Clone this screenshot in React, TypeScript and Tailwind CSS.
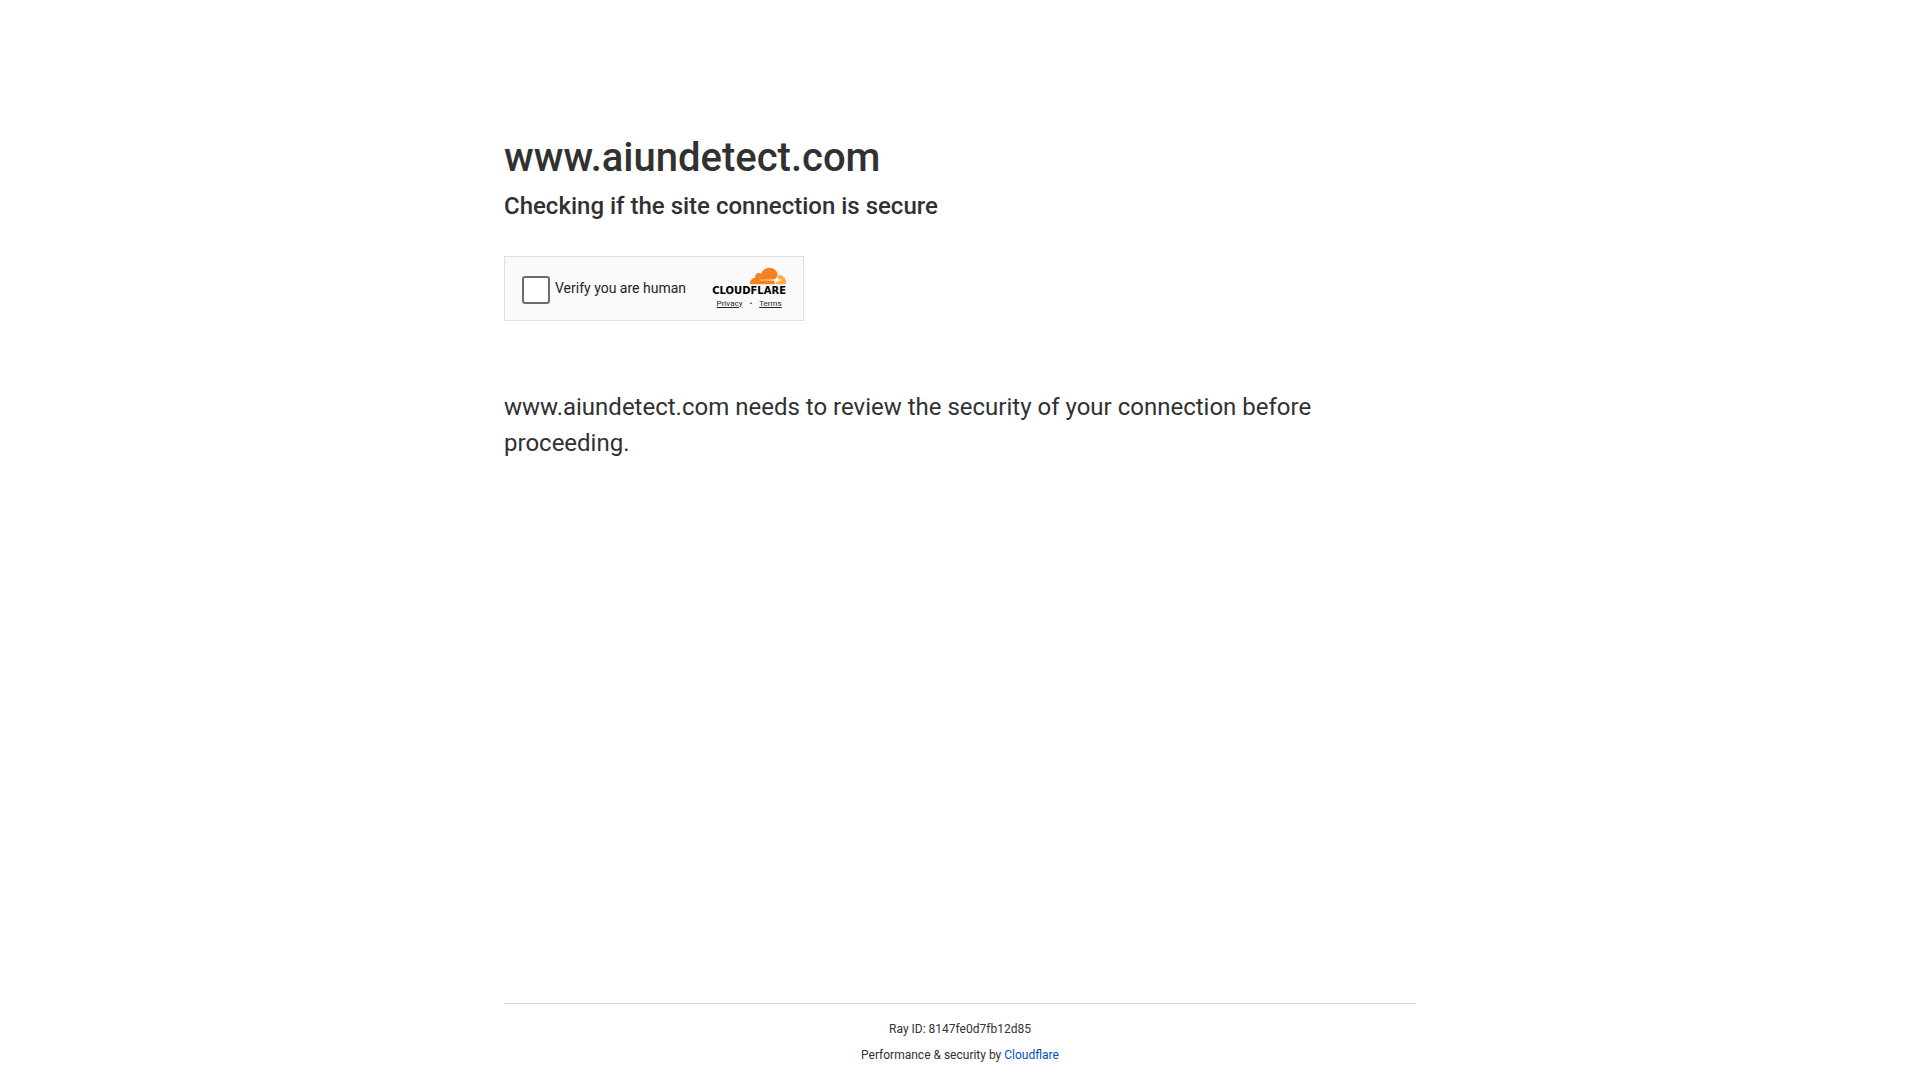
function CloudflareLogo() {
	return (
		<div className="flex flex-col items-end">
			<svg viewBox="0 6 24 12" className="h-[18px] w-9" aria-hidden="true">
				<path
					fill="#f6821f"
					d="M16.5088 16.8447c.1475-.5068.0908-.9707-.1553-1.3154-.2246-.3164-.6045-.499-1.0615-.5205l-8.6592-.1123a.1559.1559 0 0 1-.1333-.0713c-.0283-.042-.0351-.0986-.021-.1553.0278-.084.1123-.1484.2036-.1562l8.7359-.1123c1.0351-.0489 2.1601-.8868 2.5537-1.9136l.499-1.3013c.0215-.0561.0293-.1128.0147-.168-.5625-2.5463-2.835-4.4453-5.5499-4.4453-2.5039 0-4.6284 1.6177-5.3876 3.8614-.4927-.3658-1.1187-.5625-1.794-.499-1.2026.119-2.1665 1.083-2.2861 2.2856-.0283.31-.0069.6128.0635.894C1.5683 13.171 0 14.7754 0 16.752c0 .1748.0142.3515.0352.5273.0141.083.0844.1475.1689.1475h15.9814c.0909 0 .1758-.0645.2032-.1553l.12-.4268z"
				/>
				<path
					fill="#fbad41"
					d="M19.2656 11.2813c-.0771 0-.1611 0-.2383.0112-.0566 0-.1054.0415-.127.0976l-.3378 1.1744c-.1475.5068-.0918.9707.1543 1.3164.2256.3164.6055.498 1.0625.5195l1.8437.1133c.0557 0 .1055.0263.1329.0703.0283.043.0351.1074.0214.1562-.0283.084-.1132.1485-.204.1553l-1.921.1123c-1.041.0488-2.1582.8867-2.5527 1.914l-.1406.3585c-.0283.0713.0215.1416.0986.1416h6.5977c.0771 0 .1474-.0489.169-.126.1122-.4082.1757-.837.1757-1.2803 0-2.6025-2.125-4.727-4.7344-4.727"
				/>
				<path fill="#fff" d="M18.6 13.5l.4 1.1 1.1.3-1.1.3-.4 1.1-.4-1.1-1.1-.3 1.1-.3z" />
			</svg>
			<span className="font-['DejaVu_Sans',sans-serif] text-[10px] leading-3 font-bold text-black">
				CLOUDFLARE
			</span>
		</div>
	)
}

function Challenge() {
	return (
		<div className="mt-8 flex h-[65px] w-[300px] items-center justify-between border border-[#e0e0e0] bg-[#fafafa] pr-[17px] pl-[17px] text-[#232323]">
			<label className="flex items-center gap-[5px] text-sm">
				<input
					type="checkbox"
					className="mt-[3px] h-7 w-7 appearance-none rounded-[3px] border-2 border-[#6d6d6d] bg-white"
				/>
				<span className="pb-[2px]">Verify you are human</span>
			</label>
			<div className="flex flex-col items-center gap-[2px] pb-[2px]">
				<CloudflareLogo />
				<div className="flex items-center gap-[7px] text-[8px] leading-[10px]">
					<a href="#privacy" className="underline">
						Privacy
					</a>
					<span>•</span>
					<a href="#terms" className="underline">
						Terms
					</a>
				</div>
			</div>
		</div>
	)
}

export default function App() {
	return (
		<div className="flex min-h-screen flex-col bg-white font-['Roboto',sans-serif] text-[#313131]">
			<main className="mx-auto w-full max-w-[960px] flex-1 px-6 pt-32">
				<h1 className="text-[40px] leading-[60px] font-medium">www.aiundetect.com</h1>
				<h2 className="text-2xl leading-9 font-medium">Checking if the site connection is secure</h2>
				<Challenge />
				<p className="mt-[68px] text-2xl leading-9">
					www.aiundetect.com needs to review the security of your connection before proceeding.
				</p>
			</main>
			<footer className="mx-auto w-full max-w-[960px] px-6 text-xs leading-[18px]">
				<div className="border-t border-[#d9d9d9] py-4 text-center">
					<p>
						Ray ID: <span>8147fe0d7fb12d85</span>
					</p>
					<p className="mt-2">
						Performance &amp; security by{" "}
						<a href="#cloudflare" className="text-[#0051c3]">
							Cloudflare
						</a>
					</p>
				</div>
			</footer>
		</div>
	)
}
